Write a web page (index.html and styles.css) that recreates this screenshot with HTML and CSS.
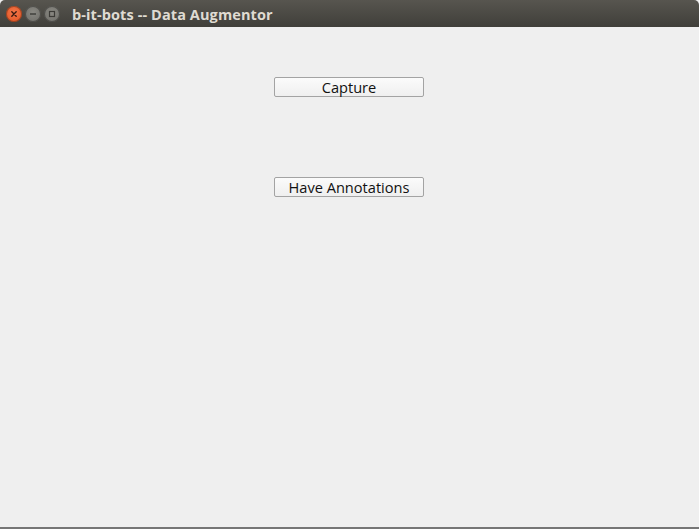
FILE: index.html
```html
<!DOCTYPE html>
<html>
<head>
<meta charset="utf-8">
<link rel="stylesheet" href="styles.css">
</head>
<body>
<div class="window">
  <div class="titlebar">
    <div class="controls">
      <span class="ctl close"><svg width="16" height="16" viewBox="0 0 16 16"><path d="M5.8 5.8 L10.2 10.2 M10.2 5.8 L5.8 10.2" stroke="#3a1a10" stroke-width="1.4" stroke-linecap="round"/></svg></span>
      <span class="ctl min"><svg width="16" height="16" viewBox="0 0 16 16"><path d="M5 8 H11" stroke="#3c3b37" stroke-width="1.4"/></svg></span>
      <span class="ctl max"><svg width="16" height="16" viewBox="0 0 16 16"><rect x="5.5" y="5.5" width="5" height="5" fill="none" stroke="#3c3b37" stroke-width="1.2"/></svg></span>
    </div>
    <div class="title">b-it-bots -- Data Augmentor</div>
  </div>
  <div class="content">
    <button class="btn">Capture</button>
    <button class="btn">Have Annotations</button>
  </div>
  <div class="bottom"></div>
</div>
</body>
</html>
```
FILE: styles.css
```css
html, body {
  margin: 0;
  padding: 0;
  width: 699px;
  height: 529px;
  overflow: hidden;
  background: #efefef;
}
.window {
  display: flex;
  flex-direction: column;
  height: 529px;
}
.titlebar {
  height: 27px;
  flex: none;
  box-sizing: border-box;
  padding-top: 1px;
  background: linear-gradient(#57554f, #403f3a);
  display: flex;
  align-items: center;
  padding-left: 6px;
  border-radius: 5px 5px 0 0;
}
.controls {
  display: flex;
  gap: 3px;
}
.ctl {
  width: 16px;
  height: 16px;
  border-radius: 50%;
  display: flex;
}
.close {
  background: radial-gradient(circle at 50% 40%, #f3774a, #e0501f);
  box-shadow: inset 0 0 0 1px rgba(40, 20, 10, 0.35);
}
.min, .max {
  background: radial-gradient(circle at 50% 40%, #8a8983, #6c6b66);
  box-shadow: inset 0 0 0 1px rgba(30, 30, 28, 0.45);
}
.title {
  margin-left: 12px;
  font-family: "Open Sans", "DejaVu Sans", sans-serif;
  font-weight: bold;
  font-size: 14.5px;
  color: #dfdbd2;
  letter-spacing: 0.1px;
}
.content {
  flex: 1;
  display: flex;
  flex-direction: column;
  align-items: center;
  padding-top: 50px;
  padding-right: 1px;
  gap: 80px;
  background: #efefef;
}
.btn {
  width: 150px;
  height: 20px;
  padding: 1px 0 0 0;
  margin: 0;
  border: 1px solid #a3a3a3;
  border-radius: 2px;
  background: linear-gradient(#fbfbfb, #efefef);
  font-family: "Open Sans", "DejaVu Sans", sans-serif;
  font-size: 14.6px;
  color: #111;
  line-height: 17px;
}
.bottom {
  height: 2px;
  flex: none;
  background: #767676;
}
```
